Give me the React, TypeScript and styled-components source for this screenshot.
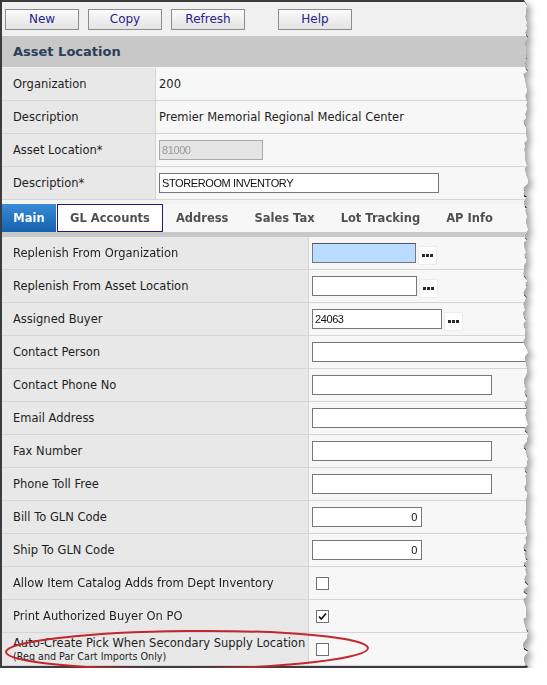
import React from "react";
import styled, { createGlobalStyle } from "styled-components";

const GlobalStyle = createGlobalStyle`
  html, body { margin: 0; padding: 0; background: #fff; }
  body { font-family: "DejaVu Sans", Verdana, sans-serif; }
`;

const SHEET_H = 668;

// jagged right edge of the cut screenshot
function tornPoints(): [number, number][] {
  let seed = 23;
  const rnd = () => {
    seed = (seed * 9301 + 49297) % 233280;
    return seed / 233280;
  };
  const pts: [number, number][] = [];
  let y = 0;
  while (y < SHEET_H) {
    pts.push([523 + Math.round(rnd() * 5), y]);
    y += 2 + Math.round(rnd() * 3);
  }
  pts.push([526, SHEET_H]);
  return pts;
}

const Shadow = styled.div`
  position: relative;
  width: 547px;
  filter: drop-shadow(4px 4px 3px rgba(0, 0, 0, 0.35));
`;

const Sheet = styled.div`
  position: relative;
  width: 534px;
  box-sizing: border-box;
  border-left: 2px solid #3c3c3c;
  border-top: 2px solid #3c3c3c;
  border-bottom: 2px solid #3c3c3c;
  background: #f7f7f7;
`;

const Edge = styled.svg`
  position: absolute;
  left: -2px;
  top: -2px;
  pointer-events: none;
`;

const Toolbar = styled.div`
  height: 34px;
  background: #f0f0f0;
  display: flex;
  align-items: flex-start;
  padding: 7px 0 0 3px;
  box-sizing: border-box;
  gap: 9px;
`;

const Button = styled.button<{ $gapBefore?: number }>`
  width: 74px;
  height: 21px;
  box-sizing: border-box;
  margin-left: ${(p) => p.$gapBefore ?? 0}px;
  border: 1px solid #8c8c8c;
  background: linear-gradient(#fbfbfb, #e3e3e3);
  color: #25238d;
  font-family: "DejaVu Sans", Verdana, sans-serif;
  font-size: 12px;
  padding: 0;
  line-height: 19px;
`;

const Header = styled.div`
  height: 31px;
  background: #c7c8c7;
  border-bottom: 1px solid #f4f4f4;
  display: flex;
  align-items: center;
  padding-left: 11px;
  font-weight: bold;
  font-size: 13px;
  color: #2b3d58;
`;

const Row = styled.div<{ $labelWidth: number }>`
  display: grid;
  grid-template-columns: ${(p) => p.$labelWidth}px 1fr;
  height: 33px;
  box-sizing: border-box;
  border-bottom: 1px solid #d5d5d5;
`;

const Label = styled.div`
  background: #e8e8e8;
  border-right: 1px solid #d5d5d5;
  display: flex;
  flex-direction: column;
  justify-content: center;
  padding-left: 11px;
  font-size: 11.5px;
  color: #1e1e1e;
  line-height: 14px;
  white-space: nowrap;
`;

const SubLabel = styled.span`
  font-size: 9.6px;
  line-height: 13px;
`;

const Value = styled.div`
  background: #f7f7f7;
  display: flex;
  align-items: center;
  padding-left: 3px;
  font-size: 11.5px;
  color: #1e1e1e;
  white-space: nowrap;
`;

const Input = styled.input<{ $w: number; $tone?: "focus" | "disabled"; $right?: boolean }>`
  width: ${(p) => p.$w}px;
  flex: none;
  height: 20px;
  box-sizing: border-box;
  border: 1px solid #777;
  border-top-color: ${(p) => (p.$tone === "focus" ? "#555" : "#777")};
  border-color: ${(p) => (p.$tone === "disabled" ? "#a9a9a9" : undefined)};
  background: ${(p) =>
    p.$tone === "focus" ? "#b8dbff" : p.$tone === "disabled" ? "#e4e4e4" : "#fff"};
  color: ${(p) => (p.$tone === "disabled" ? "#9a9a9a" : "#111")};
  font-family: "Liberation Sans", Arial, sans-serif;
  font-size: 11px;
  letter-spacing: -0.4px;
  padding: 0 4px 0 2px;
  text-align: ${(p) => (p.$right ? "right" : "left")};
  outline: none;
`;

const Dots = styled.span`
  width: 19px;
  height: 19px;
  box-sizing: border-box;
  margin: 4px 0 0 2px;
  border: 1px solid #ececec;
  background: #fff;
  display: flex;
  align-items: center;
  justify-content: center;
`;

const Box = styled.span`
  width: 13px;
  height: 13px;
  box-sizing: border-box;
  margin-left: 4px;
  border: 1px solid #707070;
  background: #fff;
  display: flex;
`;

const TabGap = styled.div`
  height: 4px;
  background: #f3f3f3;
`;

const TabBar = styled.div`
  height: 28px;
  display: flex;
  background: #f7f7f7;
  border-bottom: 5px solid #c8c8c8;
`;

const Tab = styled.div<{ $kind?: "active" | "outlined" }>`
  padding: ${(p) => (p.$kind === "active" ? "0" : p.$kind === "outlined" ? "0 12px" : "0 13px")};
  width: ${(p) => (p.$kind === "active" ? "54px" : "auto")};
  flex: none;
  justify-content: center;
  display: flex;
  align-items: center;
  box-sizing: border-box;
  font-weight: bold;
  font-size: 11.5px;
  color: ${(p) => (p.$kind === "active" ? "#fff" : "#505050")};
  background: ${(p) =>
    p.$kind === "active"
      ? "linear-gradient(#3a8bd8, #1461ad)"
      : p.$kind === "outlined"
      ? "#fff"
      : "transparent"};
  border: ${(p) => (p.$kind === "outlined" ? "1px solid #1c1c7c" : "none")};
  margin-right: ${(p) => (p.$kind === "active" ? "1px" : "0")};
`;

const Annotation = styled.svg`
  position: absolute;
  left: 0;
  top: 625px;
  pointer-events: none;
`;

function DotsIcon() {
  return (
    <Dots>
      <svg width="11" height="3" viewBox="0 0 11 3">
        <rect x="0" y="0" width="3" height="3" fill="#2a2a2a" />
        <rect x="4" y="0" width="3" height="3" fill="#2a2a2a" />
        <rect x="8" y="0" width="3" height="3" fill="#2a2a2a" />
      </svg>
    </Dots>
  );
}

function Check({ on }: { on?: boolean }) {
  return (
    <Box>
      {on && (
        <svg width="11" height="11" viewBox="0 0 11 11">
          <path d="M2 5.5 L4.3 8 L9 2.5" fill="none" stroke="#111" strokeWidth="1.7" />
        </svg>
      )}
    </Box>
  );
}

type MainRow = {
  label: string;
  sub?: string;
  input?: { w: number; value?: string; tone?: "focus"; right?: boolean; dots?: boolean };
  check?: boolean | "on";
};

const mainRows: MainRow[] = [
  { label: "Replenish From Organization", input: { w: 104, tone: "focus", dots: true } },
  { label: "Replenish From Asset Location", input: { w: 105, dots: true } },
  { label: "Assigned Buyer", input: { w: 130, value: "24063", dots: true } },
  { label: "Contact Person", input: { w: 260 } },
  { label: "Contact Phone No", input: { w: 180 } },
  { label: "Email Address", input: { w: 260 } },
  { label: "Fax Number", input: { w: 180 } },
  { label: "Phone Toll Free", input: { w: 180 } },
  { label: "Bill To GLN Code", input: { w: 110, value: "0", right: true } },
  { label: "Ship To GLN Code", input: { w: 110, value: "0", right: true } },
  { label: "Allow Item Catalog Adds from Dept Inventory", check: true },
  { label: "Print Authorized Buyer On PO", check: "on" },
  {
    label: "Auto-Create Pick When Secondary Supply Location",
    sub: "(Req and Par Cart Imports Only)",
    check: true,
  },
];

const tabs = ["Main", "GL Accounts", "Address", "Sales Tax", "Lot Tracking", "AP Info"];

export default function App() {
  const pts = tornPoints();
  const clip = `polygon(0 0, ${pts.map(([x, y]) => `${x}px ${y}px`).join(", ")}, 0 ${SHEET_H}px)`;

  return (
    <>
      <GlobalStyle />
      <Shadow>
        <Sheet style={{ clipPath: clip }}>
          <Toolbar>
            <Button>New</Button>
            <Button>Copy</Button>
            <Button>Refresh</Button>
            <Button $gapBefore={24}>Help</Button>
          </Toolbar>
          <Header>Asset Location</Header>

          <Row $labelWidth={154}>
            <Label>Organization</Label>
            <Value>200</Value>
          </Row>
          <Row $labelWidth={154}>
            <Label>Description</Label>
            <Value>Premier Memorial Regional Medical Center</Value>
          </Row>
          <Row $labelWidth={154}>
            <Label>Asset Location*</Label>
            <Value>
              <Input $w={104} $tone="disabled" defaultValue="81000" readOnly />
            </Value>
          </Row>
          <Row $labelWidth={154}>
            <Label>Description*</Label>
            <Value>
              <Input $w={280} defaultValue="STOREROOM INVENTORY" />
            </Value>
          </Row>

          <TabGap />
          <TabBar>
            {tabs.map((t, i) => (
              <Tab key={t} $kind={i === 0 ? "active" : i === 1 ? "outlined" : undefined}>
                {t}
              </Tab>
            ))}
          </TabBar>

          {mainRows.map((r) => (
            <Row key={r.label} $labelWidth={307}>
              <Label>
                <span>{r.label}</span>
                {r.sub && <SubLabel>{r.sub}</SubLabel>}
              </Label>
              <Value>
                {r.input && (
                  <>
                    <Input
                      $w={r.input.w}
                      $tone={r.input.tone}
                      $right={r.input.right}
                      defaultValue={r.input.value ?? ""}
                    />
                    {r.input.dots && <DotsIcon />}
                  </>
                )}
                {r.check && <Check on={r.check === "on"} />}
              </Value>
            </Row>
          ))}

          <Edge width="547" height={SHEET_H + 2}>
            <polyline
              points={pts.map(([x, y]) => `${x + 1.5},${y + 2}`).join(" ")}
              fill="none"
              stroke="#1a1a1a"
              strokeWidth="1.2"
            />
          </Edge>
        </Sheet>
        <Annotation width="400" height="56" viewBox="0 0 400 56">
          <ellipse
            cx="187"
            cy="25"
            rx="181"
            ry="19"
            fill="none"
            stroke="#c3262d"
            strokeWidth="2"
            transform="rotate(-0.6 187 25)"
          />
        </Annotation>
      </Shadow>
    </>
  );
}
